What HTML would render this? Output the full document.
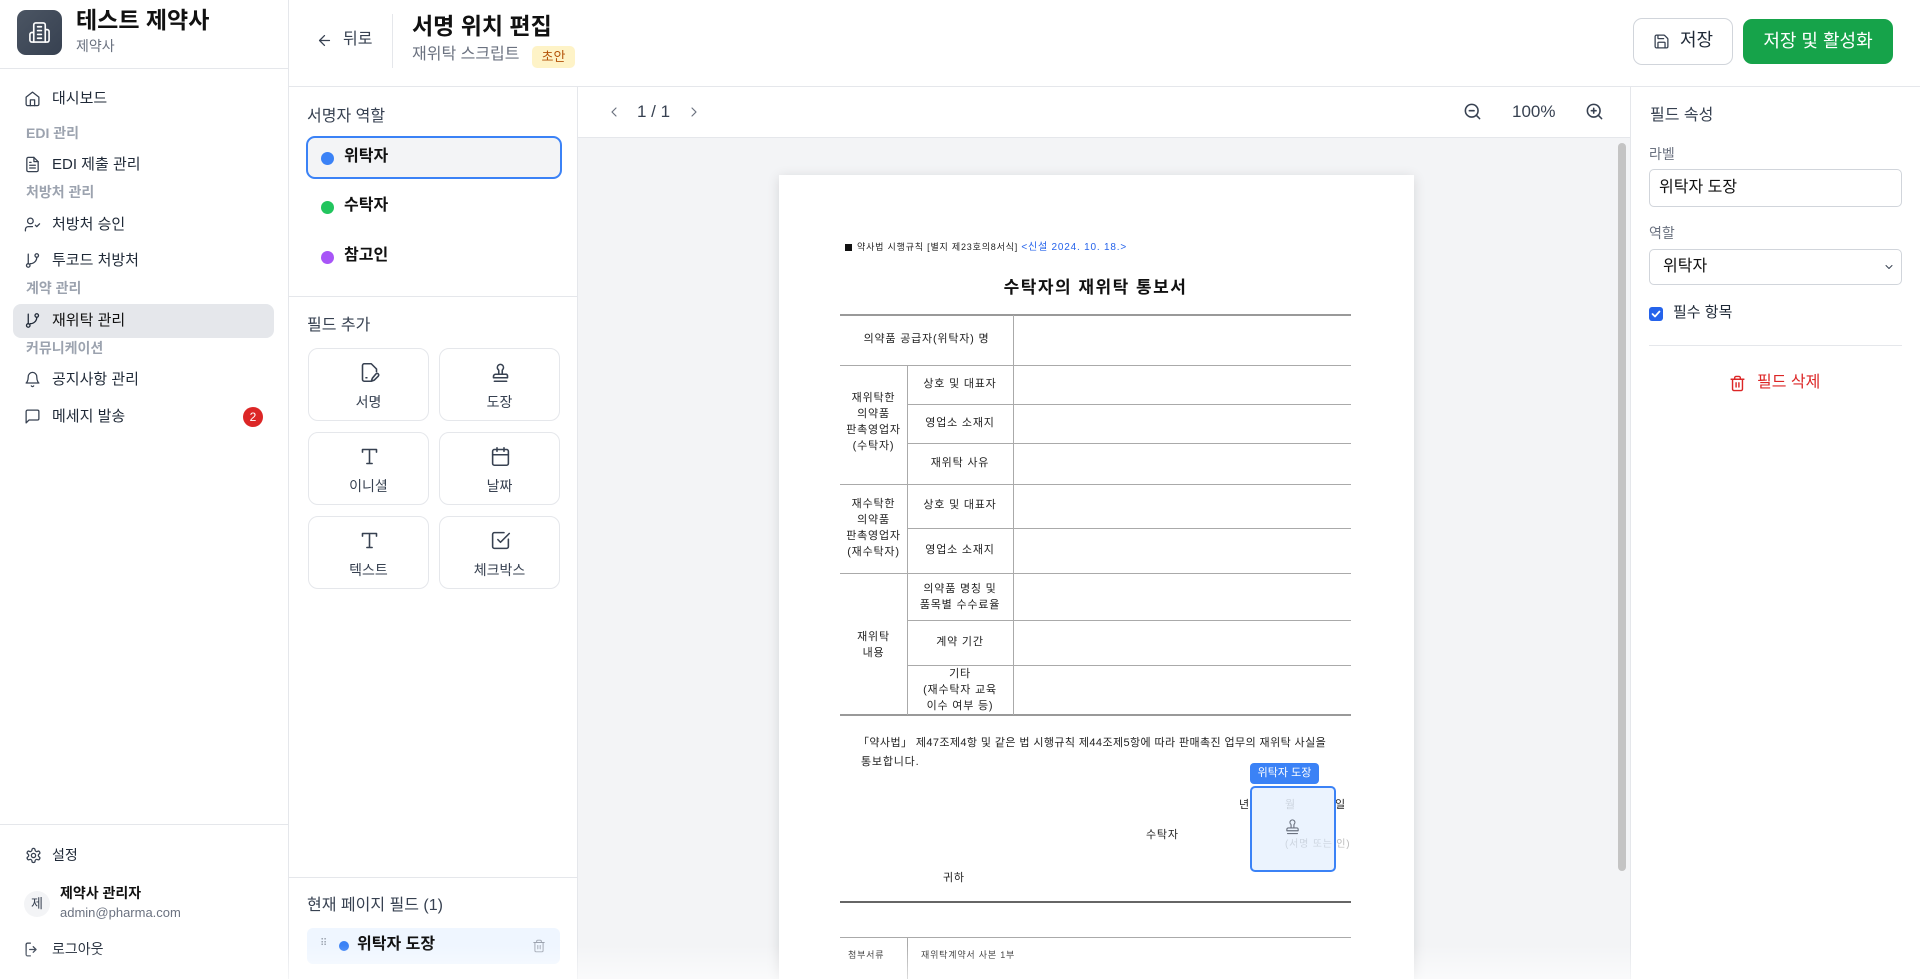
<!DOCTYPE html>
<html style="width:1920px;height:979px;overflow:hidden"><head><meta charset="utf-8">
<style>
*{box-sizing:border-box;margin:0;padding:0}
body{width:1920px;height:979px;overflow:hidden;background:#fff;font-family:"Liberation Sans","Noto Sans CJK KR",sans-serif;color:#111827;position:relative}
.a{position:absolute}
.t{position:absolute;white-space:nowrap;line-height:1}
svg{position:absolute;fill:none;stroke:currentColor;stroke-width:1.8;stroke-linecap:round;stroke-linejoin:round}
.nav{font-size:15px;color:#1f2937}
.sec{font-size:14px;color:#9ca3af;font-weight:bold}
.tile{position:absolute;width:121px;height:73px;border:1px solid #e5e7eb;border-radius:10px;background:#fff;color:#374151}
.tile span{position:absolute;left:0;right:0;top:46px;text-align:center;font-size:14px;line-height:1}
.tile svg{left:50px;top:13px;width:21px;height:21px}
.d{position:absolute;font-size:11px;color:#222;line-height:1;white-space:nowrap;letter-spacing:0.8px}
.hl{position:absolute;height:1px;background:#aaa}
.vl{position:absolute;width:1px;background:#aaa}
.c{text-align:center}
</style></head><body>

<!-- SIDEBAR -->
<div class="a" style="left:288px;top:0;width:1px;height:979px;background:#e5e7eb"></div>
<div class="a" style="left:0;top:68px;width:288px;height:1px;background:#e5e7eb"></div>
<div class="a" style="left:17px;top:10px;width:45px;height:45px;border-radius:9px;background:linear-gradient(135deg,#4b5563,#374151)"></div>
<svg style="left:28px;top:21px;width:23px;height:23px;color:#fff;stroke-width:1.7" viewBox="0 0 24 24"><path d="M6 22V4a2 2 0 0 1 2-2h8a2 2 0 0 1 2 2v18Z"/><path d="M6 12H4a2 2 0 0 0-2 2v6a2 2 0 0 0 2 2h2"/><path d="M18 9h2a2 2 0 0 1 2 2v9a2 2 0 0 1-2 2h-2"/><path d="M10 6h4M10 10h4M10 14h4M10 18h4"/></svg>
<div class="t" style="left:76px;top:9px;font-size:23px;font-weight:bold;color:#111">테스트 제약사</div>
<div class="t" style="left:76px;top:39px;font-size:14px;color:#6b7280">제약사</div>

<svg style="left:24px;top:90px;width:17px;height:17px;color:#374151" viewBox="0 0 24 24"><path d="M3 10 12 3l9 7v10a2 2 0 0 1-2 2H5a2 2 0 0 1-2-2Z"/><path d="M9 22v-8h6v8"/></svg>
<div class="t nav" style="left:52px;top:91px">대시보드</div>
<div class="t sec" style="left:26px;top:126px">EDI 관리</div>
<svg style="left:24px;top:156px;width:17px;height:17px;color:#374151" viewBox="0 0 24 24"><path d="M14 2H6a2 2 0 0 0-2 2v16a2 2 0 0 0 2 2h12a2 2 0 0 0 2-2V8Z"/><path d="M14 2v6h6M8 13h8M8 17h8M8 9h2"/></svg>
<div class="t nav" style="left:52px;top:157px">EDI 제출 관리</div>
<div class="t sec" style="left:26px;top:185px">처방처 관리</div>
<svg style="left:24px;top:216px;width:17px;height:17px;color:#374151" viewBox="0 0 24 24"><circle cx="9" cy="7" r="4"/><path d="M2 21v-2a4 4 0 0 1 4-4h6M16 13l2 2 4-4"/></svg>
<div class="t nav" style="left:52px;top:217px">처방처 승인</div>
<svg style="left:24px;top:252px;width:17px;height:17px;color:#374151" viewBox="0 0 24 24"><circle cx="6" cy="19" r="2.5"/><circle cx="18" cy="5" r="2.5"/><path d="M6 3v13.5M18 7.5A9 9 0 0 1 9 16.5"/></svg>
<div class="t nav" style="left:52px;top:253px">투코드 처방처</div>
<div class="t sec" style="left:26px;top:281px">계약 관리</div>
<div class="a" style="left:13px;top:304px;width:261px;height:34px;border-radius:8px;background:#e5e7eb"></div>
<svg style="left:24px;top:312px;width:17px;height:17px;color:#1f2937" viewBox="0 0 24 24"><circle cx="6" cy="19" r="2.5"/><circle cx="18" cy="5" r="2.5"/><path d="M6 3v13.5M18 7.5A9 9 0 0 1 9 16.5"/></svg>
<div class="t nav" style="left:52px;top:313px;color:#111">재위탁 관리</div>
<div class="t sec" style="left:26px;top:341px">커뮤니케이션</div>
<svg style="left:24px;top:371px;width:17px;height:17px;color:#374151" viewBox="0 0 24 24"><path d="M6 8a6 6 0 0 1 12 0c0 7 3 9 3 9H3s3-2 3-9"/><path d="M10.3 21a1.94 1.94 0 0 0 3.4 0"/></svg>
<div class="t nav" style="left:52px;top:372px">공지사항 관리</div>
<svg style="left:24px;top:408px;width:17px;height:17px;color:#374151" viewBox="0 0 24 24"><path d="M21 15a2 2 0 0 1-2 2H7l-4 4V5a2 2 0 0 1 2-2h14a2 2 0 0 1 2 2Z"/></svg>
<div class="t nav" style="left:52px;top:409px">메세지 발송</div>
<div class="a" style="left:243px;top:407px;width:20px;height:20px;border-radius:10px;background:#dc2626;color:#fff;font-size:12px;text-align:center;line-height:20px">2</div>

<div class="a" style="left:0;top:824px;width:288px;height:1px;background:#e5e7eb"></div>
<svg style="left:25px;top:847px;width:17px;height:17px;color:#374151" viewBox="0 0 24 24"><circle cx="12" cy="12" r="3"/><path d="M12.2 2h-.4a2 2 0 0 0-2 2v.2a2 2 0 0 1-1 1.7l-.4.3a2 2 0 0 1-2 0l-.2-.1a2 2 0 0 0-2.7.7l-.2.4a2 2 0 0 0 .7 2.7l.2.1a2 2 0 0 1 1 1.7v.5a2 2 0 0 1-1 1.7l-.2.1a2 2 0 0 0-.7 2.7l.2.4a2 2 0 0 0 2.7.7l.2-.1a2 2 0 0 1 2 0l.4.3a2 2 0 0 1 1 1.7v.2a2 2 0 0 0 2 2h.4a2 2 0 0 0 2-2v-.2a2 2 0 0 1 1-1.7l.4-.3a2 2 0 0 1 2 0l.2.1a2 2 0 0 0 2.7-.7l.2-.4a2 2 0 0 0-.7-2.7l-.2-.1a2 2 0 0 1-1-1.7v-.5a2 2 0 0 1 1-1.7l.2-.1a2 2 0 0 0 .7-2.7l-.2-.4a2 2 0 0 0-2.7-.7l-.2.1a2 2 0 0 1-2 0l-.4-.3a2 2 0 0 1-1-1.7V4a2 2 0 0 0-2-2Z"/></svg>
<div class="t" style="left:52px;top:848px;font-size:14px;color:#1f2937">설정</div>
<div class="a" style="left:24px;top:891px;width:26px;height:26px;border-radius:13px;background:#f3f4f6;font-size:13px;text-align:center;line-height:26px;color:#374151">제</div>
<div class="t" style="left:60px;top:886px;font-size:14px;font-weight:bold;color:#111">제약사 관리자</div>
<div class="t" style="left:60px;top:906px;font-size:13px;color:#6b7280">admin@pharma.com</div>
<svg style="left:24px;top:941px;width:17px;height:17px;color:#374151" viewBox="0 0 24 24"><path d="M9 21H5a2 2 0 0 1-2-2V5a2 2 0 0 1 2-2h4M16 12H8M13 8l4 4-4 4"/></svg>
<div class="t" style="left:52px;top:942px;font-size:14px;color:#1f2937">로그아웃</div>

<!-- HEADER -->
<div class="a" style="left:289px;top:86px;width:1631px;height:1px;background:#e5e7eb"></div>
<svg style="left:316px;top:32px;width:17px;height:17px;color:#374151" viewBox="0 0 24 24"><path d="M19 12H5M12 19l-7-7 7-7"/></svg>
<div class="t" style="left:343px;top:32px;font-size:16px;color:#374151">뒤로</div>
<div class="a" style="left:392px;top:14px;width:1px;height:54px;background:#e5e7eb"></div>
<div class="t" style="left:412px;top:15px;font-size:23px;font-weight:bold;color:#111">서명 위치 편집</div>
<div class="t" style="left:412px;top:47px;font-size:16px;color:#6b7280">재위탁 스크립트</div>
<div class="a" style="left:532px;top:46px;width:43px;height:22px;border-radius:5px;background:#fef3c7;color:#b45309;font-size:13px;text-align:center;line-height:22px">초안</div>
<div class="a" style="left:1633px;top:18px;width:100px;height:47px;border:1px solid #d1d5db;border-radius:9px;background:#fff"></div>
<svg style="left:1653px;top:33px;width:17px;height:17px;color:#374151" viewBox="0 0 24 24"><path d="M15.2 3a2 2 0 0 1 1.4.6l3.8 3.8a2 2 0 0 1 .6 1.4V19a2 2 0 0 1-2 2H5a2 2 0 0 1-2-2V5a2 2 0 0 1 2-2Z"/><path d="M17 21v-7a1 1 0 0 0-1-1H8a1 1 0 0 0-1 1v7M7 3v4a1 1 0 0 0 1 1h7"/></svg>
<div class="t" style="left:1680px;top:31px;font-size:18px;color:#1f2937">저장</div>
<div class="a" style="left:1743px;top:19px;width:150px;height:45px;border-radius:9px;background:#16a34a;color:#fff;font-size:18px;text-align:center;line-height:45px">저장 및 활성화</div>

<!-- LEFT PANEL -->
<div class="a" style="left:577px;top:87px;width:1px;height:892px;background:#e5e7eb"></div>
<div class="t" style="left:307px;top:109px;font-size:16px;color:#374151">서명자 역할</div>
<div class="a" style="left:306px;top:136px;width:256px;height:43px;border:2px solid #3b82f6;border-radius:9px;background:#f3f4f6"></div>
<div class="a" style="left:321px;top:152px;width:13px;height:13px;border-radius:7px;background:#3b82f6"></div>
<div class="t" style="left:344px;top:149px;font-size:16px;font-weight:bold;color:#111">위탁자</div>
<div class="a" style="left:321px;top:201px;width:13px;height:13px;border-radius:7px;background:#22c55e"></div>
<div class="t" style="left:344px;top:198px;font-size:16px;font-weight:bold;color:#111">수탁자</div>
<div class="a" style="left:321px;top:251px;width:13px;height:13px;border-radius:7px;background:#a855f7"></div>
<div class="t" style="left:344px;top:248px;font-size:16px;font-weight:bold;color:#111">참고인</div>
<div class="a" style="left:289px;top:296px;width:288px;height:1px;background:#e5e7eb"></div>
<div class="t" style="left:307px;top:318px;font-size:16px;color:#374151">필드 추가</div>

<div class="tile" style="left:308px;top:348px"><svg viewBox="0 0 24 24"><path d="M13 22H6a2 2 0 0 1-2-2V4a2 2 0 0 1 2-2h8l6 6v3"/><path d="M19.4 13.6a1.8 1.8 0 0 1 2.6 2.6L17.5 20.7 14 22l1.3-3.5Z"/><path d="M8 18h1"/></svg><span>서명</span></div>
<div class="tile" style="left:439px;top:348px"><svg viewBox="0 0 24 24"><path d="M5 22h14M19.3 14.3A2.4 2.4 0 0 0 17.7 14H6.3A2.4 2.4 0 0 0 4 16.4V18h16v-1.6a2.4 2.4 0 0 0-.7-2.1Z"/><path d="M14 14V9.8a2.2 2.2 0 0 1 .8-1.6A3.5 3.5 0 1 0 9 8.2a2.2 2.2 0 0 1 1 1.6V14"/></svg><span>도장</span></div>
<div class="tile" style="left:308px;top:432px"><svg viewBox="0 0 24 24"><path d="M4 7V4h16v3M9 20h6M12 4v16"/></svg><span>이니셜</span></div>
<div class="tile" style="left:439px;top:432px"><svg viewBox="0 0 24 24"><rect x="3" y="4" width="18" height="18" rx="2"/><path d="M16 2v4M8 2v4M3 10h18"/></svg><span>날짜</span></div>
<div class="tile" style="left:308px;top:516px"><svg viewBox="0 0 24 24"><path d="M4 7V4h16v3M9 20h6M12 4v16"/></svg><span>텍스트</span></div>
<div class="tile" style="left:439px;top:516px"><svg viewBox="0 0 24 24"><path d="M21 10.5V19a2 2 0 0 1-2 2H5a2 2 0 0 1-2-2V5a2 2 0 0 1 2-2h11"/><path d="m9 11 3 3L22 4"/></svg><span>체크박스</span></div>

<div class="a" style="left:289px;top:877px;width:288px;height:1px;background:#e5e7eb"></div>
<div class="t" style="left:307px;top:898px;font-size:16px;color:#374151">현재 페이지 필드 (1)</div>
<div class="a" style="left:307px;top:928px;width:253px;height:36px;border-radius:6px;background:#eff6ff"></div>
<div class="t" style="left:320px;top:939px;font-size:10px;color:#9ca3af;letter-spacing:1px">⠿</div>
<div class="a" style="left:339px;top:941px;width:10px;height:10px;border-radius:5px;background:#3b82f6"></div>
<div class="t" style="left:357px;top:937px;font-size:16px;font-weight:bold;color:#111">위탁자 도장</div>
<svg style="left:532px;top:939px;width:14px;height:14px;color:#9ca3af;stroke-width:1.6" viewBox="0 0 24 24"><path d="M3 6h18M19 6v14a2 2 0 0 1-2 2H7a2 2 0 0 1-2-2V6M8 6V4a2 2 0 0 1 2-2h4a2 2 0 0 1 2 2v2M10 11v6M14 11v6"/></svg>

<!-- VIEWER -->
<div class="a" style="left:578px;top:138px;width:1052px;height:841px;background:#f3f4f6"></div>
<div class="a" style="left:578px;top:137px;width:1052px;height:1px;background:#e5e7eb"></div>
<svg style="left:606px;top:104px;width:16px;height:16px;color:#6b7280" viewBox="0 0 24 24"><path d="m15 18-6-6 6-6"/></svg>
<div class="t" style="left:637px;top:103px;font-size:17px;color:#374151">1 / 1</div>
<svg style="left:686px;top:104px;width:16px;height:16px;color:#6b7280" viewBox="0 0 24 24"><path d="m9 18 6-6-6-6"/></svg>
<svg style="left:1463px;top:102px;width:19px;height:19px;color:#374151;stroke-width:2" viewBox="0 0 24 24"><circle cx="11" cy="11" r="8"/><path d="m21 21-4.3-4.3M8 11h6"/></svg>
<div class="t" style="left:1512px;top:103px;font-size:17px;color:#374151">100%</div>
<svg style="left:1585px;top:102px;width:19px;height:19px;color:#374151;stroke-width:2" viewBox="0 0 24 24"><circle cx="11" cy="11" r="8"/><path d="m21 21-4.3-4.3M11 8v6M8 11h6"/></svg>
<div class="a" style="left:1618px;top:143px;width:8px;height:728px;border-radius:4px;background:#c4c4c4"></div>

<div class="a" style="left:779px;top:175px;width:635px;height:804px;background:#fff;box-shadow:0 2px 12px rgba(0,0,0,.12)"></div>
<!-- doc -->
<div class="a" style="left:845px;top:244px;width:7px;height:7px;background:#111"></div>
<div class="d" style="left:857px;top:243px;font-size:9px">약사법 시행규칙 [별지 제23호의8서식] <span style="color:#2563eb;font-size:10px">&lt;신설 2024. 10. 18.&gt;</span></div>
<div class="d" style="left:840px;width:511px;top:279px;text-align:center;font-size:17px;font-weight:bold;letter-spacing:1.5px;color:#111">수탁자의 재위탁 통보서</div>

<div class="hl" style="left:840px;width:511px;top:314px;height:2px;background:#999"></div>
<div class="hl" style="left:840px;width:511px;top:365px"></div>
<div class="hl" style="left:907px;width:444px;top:404px"></div>
<div class="hl" style="left:907px;width:444px;top:443px"></div>
<div class="hl" style="left:840px;width:511px;top:484px"></div>
<div class="hl" style="left:907px;width:444px;top:528px"></div>
<div class="hl" style="left:840px;width:511px;top:573px"></div>
<div class="hl" style="left:907px;width:444px;top:620px"></div>
<div class="hl" style="left:907px;width:444px;top:665px"></div>
<div class="hl" style="left:840px;width:511px;top:714px;height:2px;background:#999"></div>
<div class="vl" style="left:907px;top:365px;height:350px"></div>
<div class="vl" style="left:1013px;top:315px;height:400px"></div>

<div class="d c" style="left:840px;width:173px;top:334px">의약품 공급자(위탁자) 명</div>
<div class="d c" style="left:840px;width:67px;top:390px;line-height:16px">재위탁한<br>의약품<br>판촉영업자<br>(수탁자)</div>
<div class="d c" style="left:907px;width:106px;top:379px">상호 및 대표자</div>
<div class="d c" style="left:907px;width:106px;top:418px">영업소 소재지</div>
<div class="d c" style="left:907px;width:106px;top:458px">재위탁 사유</div>
<div class="d c" style="left:840px;width:67px;top:496px;line-height:16px">재수탁한<br>의약품<br>판촉영업자<br>(재수탁자)</div>
<div class="d c" style="left:907px;width:106px;top:500px">상호 및 대표자</div>
<div class="d c" style="left:907px;width:106px;top:545px">영업소 소재지</div>
<div class="d c" style="left:840px;width:67px;top:629px;line-height:16px">재위탁<br>내용</div>
<div class="d c" style="left:907px;width:106px;top:581px;line-height:16px">의약품 명칭 및<br>품목별 수수료율</div>
<div class="d c" style="left:907px;width:106px;top:637px">계약 기간</div>
<div class="d c" style="left:907px;width:106px;top:666px;line-height:16px">기타<br>(재수탁자 교육<br>이수 여부 등)</div>

<div class="d" style="left:858px;top:738px;letter-spacing:0.4px">「약사법」 제47조제4항 및 같은 법 시행규칙 제44조제5항에 따라 판매촉진 업무의 재위탁 사실을</div>
<div class="d" style="left:861px;top:757px">통보합니다.</div>
<div class="d" style="left:1239px;top:800px">년</div>
<div class="d" style="left:1285px;top:800px;color:#bbb">월</div>
<div class="d" style="left:1335px;top:800px">일</div>
<div class="d" style="left:1146px;top:830px">수탁자</div>
<div class="d" style="left:1285px;top:840px;color:#bbb;font-size:10px">(서명 또는 인)</div>
<div class="d" style="left:943px;top:873px">귀하</div>
<div class="hl" style="left:840px;width:511px;top:901px;height:2px;background:#666"></div>
<div class="hl" style="left:840px;width:511px;top:937px"></div>
<div class="vl" style="left:907px;top:937px;height:42px"></div>
<div class="d" style="left:848px;top:951px;font-size:9px">첨부서류</div>
<div class="d" style="left:921px;top:951px;font-size:9px">재위탁계약서 사본 1부</div>

<!-- placed field -->
<div class="a" style="left:1250px;top:763px;width:69px;height:21px;border-radius:4px;background:#3b82f6;color:#fff;font-size:11px;text-align:center;line-height:21px">위탁자 도장</div>
<div class="a" style="left:1250px;top:786px;width:86px;height:86px;border:2px solid #3b82f6;border-radius:5px;background:rgba(219,234,254,.55)"></div>
<svg style="left:1284px;top:818px;width:17px;height:17px;color:#6b7280;stroke-width:1.6" viewBox="0 0 24 24"><path d="M5 22h14M19.3 14.3A2.4 2.4 0 0 0 17.7 14H6.3A2.4 2.4 0 0 0 4 16.4V18h16v-1.6a2.4 2.4 0 0 0-.7-2.1Z"/><path d="M14 14V9.8a2.2 2.2 0 0 1 .8-1.6A3.5 3.5 0 1 0 9 8.2a2.2 2.2 0 0 1 1 1.6V14"/></svg>

<!-- RIGHT PANEL -->
<div class="a" style="left:1630px;top:87px;width:1px;height:892px;background:#e5e7eb"></div>
<div class="t" style="left:1650px;top:108px;font-size:16px;color:#374151">필드 속성</div>
<div class="t" style="left:1649px;top:147px;font-size:14px;color:#6b7280">라벨</div>
<div class="a" style="left:1649px;top:169px;width:253px;height:38px;border:1px solid #d1d5db;border-radius:5px"></div>
<div class="t" style="left:1659px;top:180px;font-size:16px;color:#111">위탁자 도장</div>
<div class="t" style="left:1649px;top:226px;font-size:14px;color:#6b7280">역할</div>
<div class="a" style="left:1649px;top:249px;width:253px;height:36px;border:1px solid #d1d5db;border-radius:5px"></div>
<div class="t" style="left:1663px;top:259px;font-size:16px;color:#111">위탁자</div>
<svg style="left:1883px;top:261px;width:12px;height:12px;color:#374151;stroke-width:2" viewBox="0 0 24 24"><path d="m6 9 6 6 6-6"/></svg>
<div class="a" style="left:1649px;top:307px;width:14px;height:14px;border-radius:3px;background:#2563eb"></div>
<svg style="left:1650px;top:308px;width:12px;height:12px;color:#fff;stroke-width:3.5" viewBox="0 0 24 24"><path d="M5 12l5 5 9-10"/></svg>
<div class="t" style="left:1673px;top:305px;font-size:15px;color:#1f2937">필수 항목</div>
<div class="a" style="left:1649px;top:345px;width:253px;height:1px;background:#e5e7eb"></div>
<svg style="left:1729px;top:375px;width:17px;height:17px;color:#dc2626;stroke-width:2" viewBox="0 0 24 24"><path d="M3 6h18M19 6v14a2 2 0 0 1-2 2H7a2 2 0 0 1-2-2V6M8 6V4a2 2 0 0 1 2-2h4a2 2 0 0 1 2 2v2M10 11v6M14 11v6"/></svg>
<div class="t" style="left:1757px;top:375px;font-size:16px;color:#dc2626">필드 삭제</div>

<div class="a" style="left:0;top:945px;width:1920px;height:34px;background:linear-gradient(rgba(255,255,255,0),rgba(255,255,255,.6))"></div>
</body></html>
